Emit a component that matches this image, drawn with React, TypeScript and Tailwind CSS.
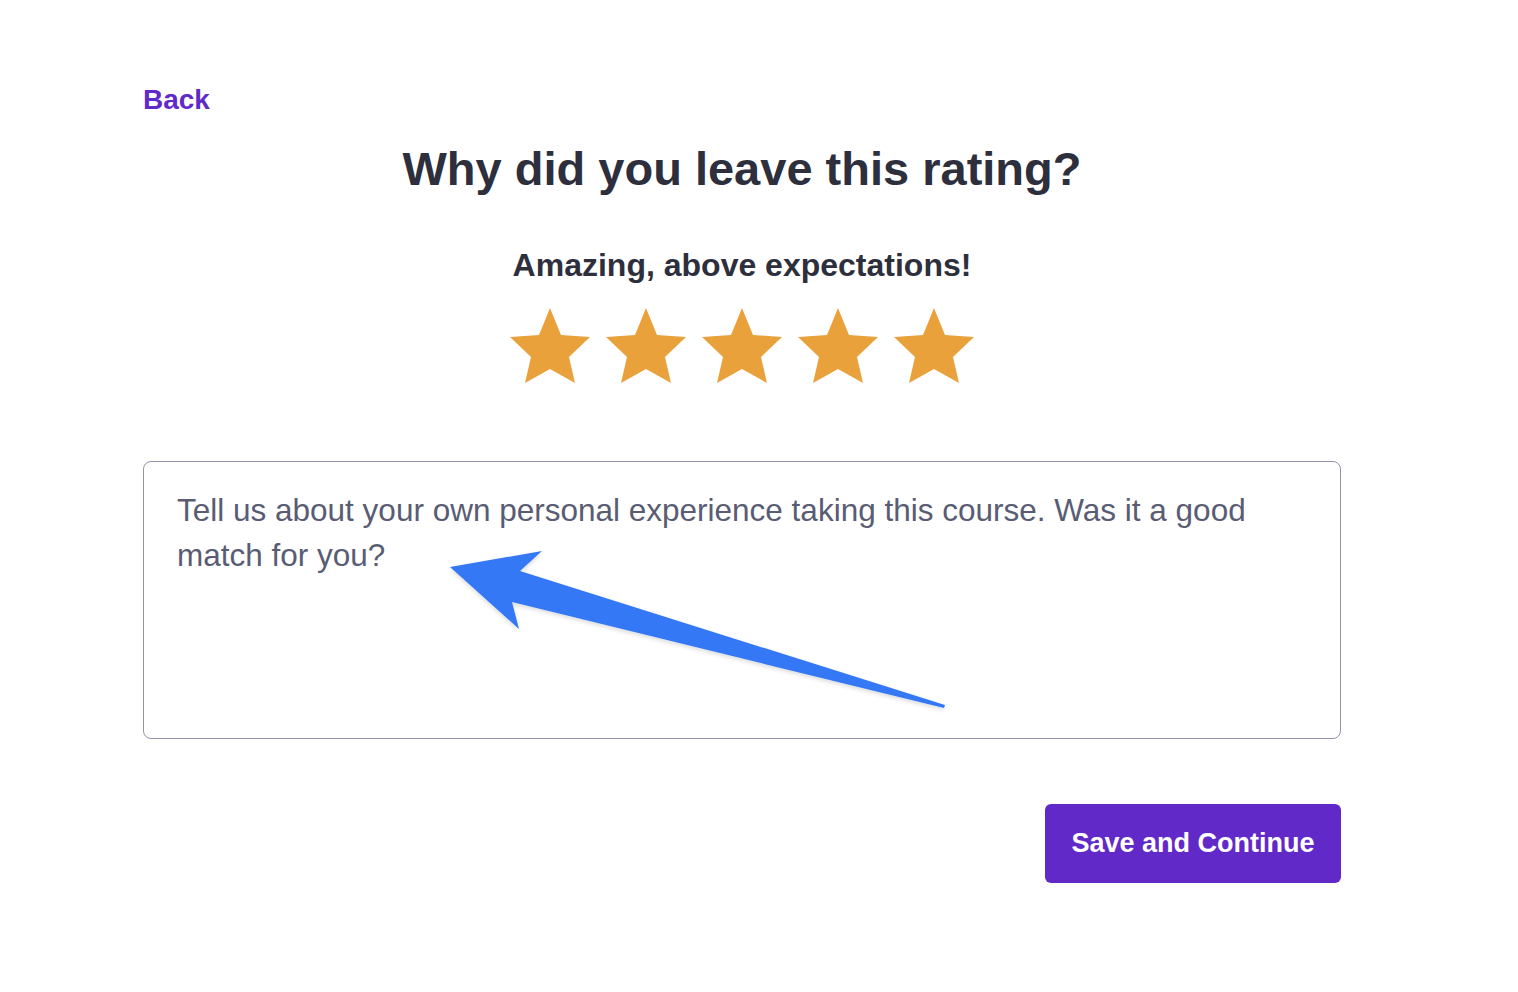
import React from 'react'

const font = { fontFamily: '"Liberation Sans", Arial, sans-serif' }

function Star() {
  return (
    <svg viewBox="0 0 80 77" className="w-20 h-[77px]">
      <polygon
        points="40,1 51,28 80,30 59,50 65,76 40,62 15,76 21,50 0,30 29,28"
        fill="#e9a23b"
      />
    </svg>
  )
}

export default function App() {
  return (
    <div className="relative min-h-[992px] bg-white" style={font}>
      <div className="ml-[143px] w-[1198px] pt-[84px] flex flex-col">
        <a className="self-start text-[28px] leading-[32px] font-bold text-[#5f2bc8] cursor-pointer">
          Back
        </a>

        <h1 className="mt-[25px] text-center text-[47px] leading-[56px] font-bold text-[#2d2f3d]">
          Why did you leave this rating?
        </h1>

        <p className="mt-[48px] text-center text-[32px] leading-[40px] font-bold text-[#2d2f3d]">
          Amazing, above expectations!
        </p>

        <div className="mt-[22px] flex justify-center gap-4">
          <Star />
          <Star />
          <Star />
          <Star />
          <Star />
        </div>

        {/* Comment box */}
        <textarea
          className="mt-[77px] h-[278px] w-full resize-none rounded-lg border-[1.5px] border-[#9194ac] px-[33px] pt-[26px] text-[31.5px] leading-[45px] text-[#2d2f3d] placeholder:text-[#595c73] outline-none"
          style={font}
          placeholder="Tell us about your own personal experience taking this course. Was it a good match for you?"
        />

        <div className="mt-[65px] flex justify-end">
          <button
            className="h-[79px] w-[296px] rounded-md bg-[#6229c9] text-[27px] font-bold text-white"
            style={font}
          >
            Save and Continue
          </button>
        </div>
      </div>

      {/* Annotation arrow */}
      <svg
        className="absolute left-0 top-0 w-[1518px] h-[992px] pointer-events-none"
        viewBox="0 0 1518 992"
      >
        <defs>
          <filter id="arrowShadow" x="-10%" y="-10%" width="120%" height="130%">
            <feDropShadow dx="0" dy="2" stdDeviation="2" floodColor="#000" floodOpacity="0.15" />
          </filter>
        </defs>
        <polygon
          points="450,567 542,551 520,571 945,705 944,708 512,602 519,629"
          fill="#3578f6"
          filter="url(#arrowShadow)"
        />
      </svg>
    </div>
  )
}
